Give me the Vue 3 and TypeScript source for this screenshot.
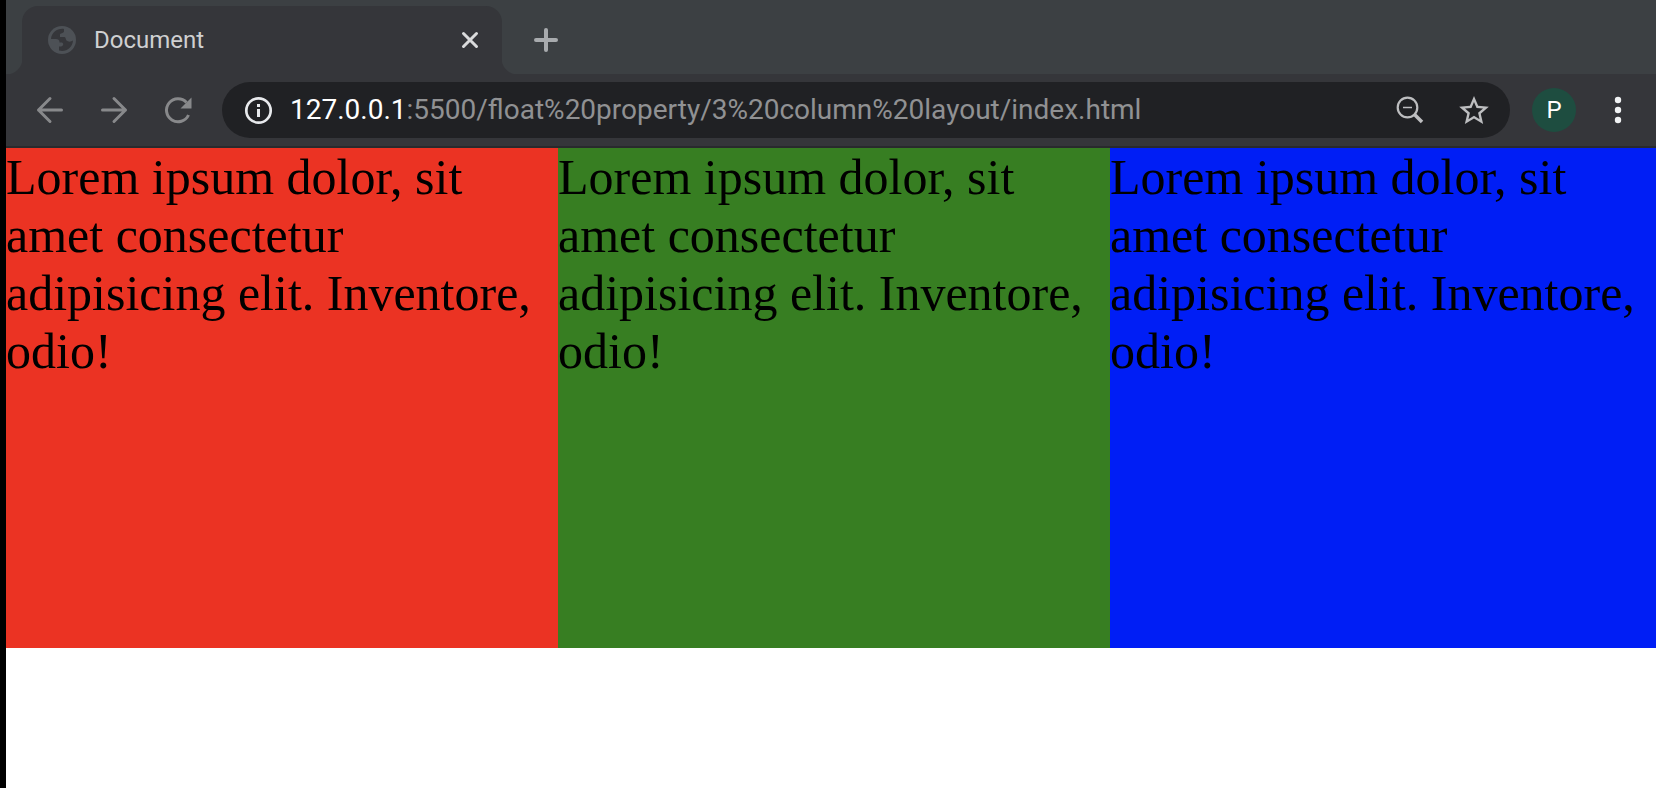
<script setup lang="ts">
import { ref } from 'vue'

const host = '127.0.0.1'
const path = ref<string>(':5500/float%20property/3%20column%20layout/index.html')

interface Column {
  id: number
  tone: string
}

const columns: Column[] = [
  { id: 1, tone: 'red' },
  { id: 2, tone: 'green' },
  { id: 3, tone: 'blue' },
]
</script>

<template>
  <div class="window">
    <header class="chrome">
      <div class="tabs">
        <div class="tab">
          <svg class="globe" width="28" height="28" viewBox="0 0 28 28" aria-hidden="true">
            <circle cx="14" cy="14" r="14" fill="#4d5156" />
            <path
              d="M16 3C10 2 3.500 6 3 13H8C10 13 11.500 14 11.500 16V16.500H14C16 17.500 15.500 20 13 20.500H11V24.500C18 26.500 24.500 21.500 25 14.500C23 16 20 16 18.500 14.500C17.500 13.500 18 11.500 16.500 11H12V8.500C12 7 15.500 7.500 16 5.500Z"
              fill="#35363a"
            />
          </svg>
          <span class="title">Document</span>
          <button class="icon" type="button" aria-label="Close tab">
            <svg width="24" height="24" viewBox="0 0 24 24" fill="none" stroke="#dadbdc" stroke-width="3" stroke-linecap="round">
              <path d="M5.500 5.500l13 13M18.500 5.500l-13 13" />
            </svg>
          </button>
        </div>
        <button class="icon new-tab" type="button" aria-label="New tab">
          <svg width="28" height="28" viewBox="0 0 28 28" fill="none" stroke="#a8abae" stroke-width="4" stroke-linecap="round">
            <path d="M14 4v20M4 14h20" />
          </svg>
        </button>
      </div>

      <div class="toolbar">
        <nav class="nav" aria-label="History">
          <button class="icon" type="button" aria-label="Back">
            <svg width="32" height="32" viewBox="0 0 32 32" fill="none" stroke="#88898b" stroke-width="3" stroke-linecap="round" stroke-linejoin="round">
              <path d="M27.500 16H4.500M16 4.500L4.500 16L16 27.500" />
            </svg>
          </button>
          <button class="icon" type="button" aria-label="Forward">
            <svg width="32" height="32" viewBox="0 0 32 32" fill="none" stroke="#88898b" stroke-width="3" stroke-linecap="round" stroke-linejoin="round">
              <path d="M4.500 16h23M16 4.500L27.500 16L16 27.500" />
            </svg>
          </button>
          <button class="icon" type="button" aria-label="Reload">
            <svg width="32" height="32" viewBox="0 0 32 32" fill="none">
              <path d="M24.500 8.500A11.500 11.500 0 1 0 26.500 21" stroke="#88898b" stroke-width="3" />
              <path d="M29.500 3.500V14.500H18.500Z" fill="#88898b" />
            </svg>
          </button>
        </nav>

        <form class="address" @submit.prevent>
          <button class="icon" type="button" aria-label="Site information">
            <svg width="32" height="32" viewBox="0 0 32 32" fill="none">
              <circle cx="16.500" cy="16.500" r="12.200" stroke="#e8eaed" stroke-width="2.700" />
              <path d="M15 10h3v3h-3zM15 15h3v8h-3z" fill="#e8eaed" />
            </svg>
          </button>
          <label class="url">
            <span class="host">{{ host }}</span>
            <input v-model="path" class="path" type="text" aria-label="Address" spellcheck="false" />
          </label>
          <button class="icon" type="button" aria-label="Zoom level">
            <svg width="32" height="32" viewBox="0 0 32 32" fill="none" stroke="#bdbec0">
              <circle cx="13.500" cy="13.500" r="9.800" stroke-width="2.200" />
              <path d="M9 13.500h9" stroke-width="1.500" />
              <path d="M20.500 20.500l7.500 7.500" stroke-width="3.500" />
            </svg>
          </button>
          <button class="icon" type="button" aria-label="Bookmark this page">
            <svg width="32" height="32" viewBox="1.200 .7 21.600 21.600" fill="#bdbec0">
              <path d="M22 9.240l-7.190-.62L12 2 9.190 8.630 2 9.240l5.460 4.730L5.820 21 12 17.270 18.180 21l-1.630-7.030L22 9.240zM12 15.400l-3.760 2.270 1-4.280-3.320-2.880 4.380-.38L12 6.100l1.710 4.040 4.380.38-3.320 2.880 1 4.280L12 15.400z" />
            </svg>
          </button>
        </form>

        <button class="avatar" type="button" aria-label="Profile">P</button>
        <button class="icon menu" type="button" aria-label="Menu">
          <svg width="8" height="28" viewBox="0 0 8 28" fill="#f1f3f4">
            <circle cx="4" cy="4" r="3.200" />
            <circle cx="4" cy="14" r="3.200" />
            <circle cx="4" cy="24" r="3.200" />
          </svg>
        </button>
      </div>
    </header>

    <main class="page">
      <section v-for="column in columns" :key="column.id" class="column" :class="column.tone">
        Lorem ipsum dolor, sit amet consectetur adipisicing elit. Inventore, odio!
      </section>
    </main>
  </div>
</template>

<style>
body {
  margin: 0;
  background: #fff;
}
</style>

<style scoped>
.window {
  box-sizing: border-box;
  min-height: 100vh;
  overflow: hidden;
  border-left: 6px solid #000;
  background: #fff;
}

.chrome {
  background: #35363a;
  border-bottom: 2px solid #292a2d;
  font-family: Roboto, sans-serif;
}

.icon {
  display: flex;
  flex: none;
  padding: 0;
  border: 0;
  background: none;
}

.tabs {
  display: flex;
  align-items: center;
  padding: 6px 0 0 16px;
  background: #3c4043;
}

.tab {
  position: relative;
  display: flex;
  align-items: center;
  box-sizing: border-box;
  width: 480px;
  height: 68px;
  padding: 0 20px 0 26px;
  gap: 18px;
  background: #35363a;
  border-radius: 16px 16px 0 0;
}

/* Concave flares where the tab meets the toolbar */
.tab::before,
.tab::after {
  content: '';
  position: absolute;
  bottom: 0;
  width: 16px;
  height: 16px;
}

.tab::before {
  right: 100%;
  background: radial-gradient(circle at 0 0, transparent 16px, #35363a 17px);
}

.tab::after {
  left: 100%;
  background: radial-gradient(circle at 100% 0, transparent 16px, #35363a 17px);
}

.globe {
  flex: none;
}

.title {
  flex: 1;
  color: #cfd0d1;
  font-size: 24px;
  line-height: 32px;
}

.new-tab {
  margin-left: 30px;
}

.toolbar {
  display: flex;
  align-items: center;
  height: 72px;
  padding: 0 34px 0 28px;
}

.nav {
  display: flex;
  gap: 32px;
  margin-right: 28px;
}

.address {
  display: flex;
  flex: 1;
  align-items: center;
  gap: 32px;
  height: 56px;
  padding: 0 20px;
  border-radius: 28px;
  background: #202124;
}

.url {
  display: flex;
  flex: 1;
  align-items: center;
  margin-left: -16px;
  font-size: 28px;
  line-height: 36px;
}

.host {
  color: #fff;
}

.path {
  flex: 1;
  min-width: 0;
  padding: 0;
  border: 0;
  outline: 0;
  background: none;
  color: #909193;
  font: inherit;
}

.avatar {
  width: 44px;
  height: 44px;
  margin: 0 38px 0 22px;
  padding: 0;
  border: 0;
  border-radius: 50%;
  background: #1e4d40;
  color: #fff;
  font: 24px/44px Roboto, sans-serif;
}

.page {
  display: flex;
}

.column {
  box-sizing: border-box;
  flex: 0 0 calc(100vw / 3);
  height: 500px;
  color: #000;
  font: 50px/58px 'Liberation Serif', serif;
}

.red {
  background: #eb3323;
}

.green {
  background: #377e22;
}

.blue {
  background: #001ef5;
}
</style>
